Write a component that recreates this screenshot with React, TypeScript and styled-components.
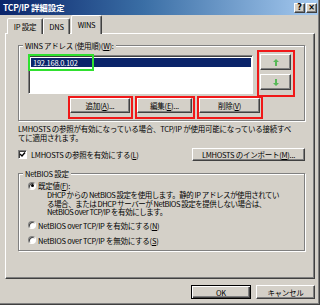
import React from "react";
import styled, { createGlobalStyle, css } from "styled-components";

const FONT = `"Noto Sans CJK JP", "Noto Sans", sans-serif`;

const GlobalStyle = createGlobalStyle`
  html, body { margin: 0; padding: 0; }
  body {
    background: #d4d0c8;
    font-family: ${FONT};
    font-size: 7.5px;
    letter-spacing: -0.25px;
    color: #000;
    overflow: hidden;
  }
  * { box-sizing: border-box; }
`;

const Window = styled.div`
  width: 320px;
  height: 305px;
  background: #d4d0c8;
  border-right: 1px solid #404040;
  border-bottom: 1px solid #404040;
  box-shadow: inset -1px -1px 0 #808080;
  display: flex;
  flex-direction: column;
`;

const TitleBar = styled.div`
  height: 15px;
  width: 318px;
  flex: none;
  background: linear-gradient(to right, #0a246a 0%, #3a6ea5 45%, #a6caf0 100%);
  display: flex;
  align-items: center;
  justify-content: space-between;
  padding: 0 1px 0 3px;
`;

const TitleText = styled.span`
  color: #fff;
  font-weight: bold;
  font-size: 8.5px;
  letter-spacing: -0.2px;
  line-height: 15px;
`;

const CaptionButtons = styled.div`
  display: flex;
  gap: 1px;
`;

const CaptionButton = styled.div`
  width: 11px;
  height: 10px;
  background: #d4d0c8;
  border: 1px solid;
  border-color: #fff #404040 #404040 #fff;
  box-shadow: inset -1px -1px 0 #808080;
  display: flex;
  align-items: center;
  justify-content: center;
  font-size: 8px;
  font-weight: bold;
  line-height: 8px;
  font-family: "DejaVu Sans", sans-serif;
  letter-spacing: 0;
`;

const Body = styled.div`
  flex: 1;
  display: flex;
  flex-direction: column;
  padding: 0 4px 0 5px;
`;

const TabStrip = styled.div`
  display: flex;
  align-items: flex-end;
  height: 19px;
  padding-left: 2px;
  margin-bottom: -1px;
  position: relative;
  z-index: 1;
`;

const Tab = styled.div<{ $active?: boolean; $w: number }>`
  width: ${(p) => p.$w}px;
  height: 16px;
  background: #d4d0c8;
  border: 1px solid;
  border-bottom: none;
  border-color: #fff #404040 transparent #fff;
  box-shadow: inset -1px 0 0 #808080;
  border-radius: 2px 2px 0 0;
  display: flex;
  align-items: center;
  justify-content: center;
  line-height: 9px;
  padding-bottom: 1px;
  ${(p) =>
    p.$active &&
    css`
      height: 19px;
      margin-left: 1px;
      padding-bottom: 2px;
    `}
`;

const Panel = styled.div`
  height: 246px;
  border: 1px solid;
  border-color: #fff #404040 #404040 #fff;
  box-shadow: inset -1px -1px 0 #808080;
  padding: 7px 9px 0 12px;
  display: flex;
  flex-direction: column;
`;

const GroupBox = styled.fieldset<{ $pb: number }>`
  margin: 0;
  padding: 0 9px ${(p) => p.$pb}px 9px;
  border: 1px solid #808080;
  box-shadow: inset 1px 1px 0 #fff, 1px 1px 0 #fff;
  min-width: 0;
`;

const Legend = styled.legend`
  padding: 0 2px;
  margin-left: -5px;
  line-height: 9px;
  background: #d4d0c8;
`;

const ListRow = styled.div`
  display: flex;
  align-items: flex-start;
  height: 42px;
  margin-top: 5px;
`;

const ListBox = styled.div`
  position: relative;
  width: 231px;
  height: 39px;
  background: #fff;
  border: 1px solid;
  border-color: #808080 #fff #fff #808080;
  box-shadow: inset 1px 1px 0 #404040;
  padding: 2px 1px 0 2px;
`;

const ListItem = styled.div<{ $selected?: boolean }>`
  height: 9px;
  line-height: 9px;
  padding-left: 2px;
  ${(p) =>
    p.$selected &&
    css`
      background: #0a246a;
      color: #fff;
    `}
`;

const Highlight = styled.div<{ $color: string }>`
  border: 2px solid ${(p) => p.$color};
`;

const ItemMark = styled(Highlight)`
  position: absolute;
  left: -1px;
  top: -2px;
  width: 66px;
  height: 17px;
`;

const ArrowBox = styled(Highlight)`
  margin-left: 4px;
  margin-top: -5px;
  width: 38px;
  height: 47px;
  display: flex;
  flex-direction: column;
  gap: 4px;
  padding: 2px 2px 0 1px;
`;

const ButtonPad = styled(Highlight)`
  padding: 0 1px 4px 0;
`;

const Button = styled.div<{ $w: number; $h?: number; $default?: boolean }>`
  width: ${(p) => p.$w}px;
  height: ${(p) => p.$h ?? 15}px;
  background: #d4d0c8;
  border: 1px solid;
  border-color: #fff #404040 #404040 #fff;
  box-shadow: inset -1px -1px 0 #808080;
  display: flex;
  align-items: center;
  justify-content: center;
  line-height: 9px;
  white-space: nowrap;
  ${(p) =>
    p.$default &&
    css`
      border: 1px solid #000;
      box-shadow: inset 1px 1px 0 #fff, inset -1px -1px 0 #404040, inset -2px -2px 0 #808080;
    `}
`;

const ButtonRow = styled.div`
  display: flex;
  gap: 2px;
  margin-left: 40px;
  margin-top: -1px;
`;

const Note = styled.p`
  margin: 3px 0 0 0;
  line-height: 9px;
  white-space: nowrap;
`;

const CheckRow = styled.div`
  display: flex;
  align-items: center;
  justify-content: space-between;
  margin-top: 6px;
  height: 13px;
`;

const CheckLabel = styled.label`
  display: flex;
  align-items: center;
  gap: 4px;
  line-height: 9px;
`;

const CheckBox = styled.span`
  width: 9px;
  height: 9px;
  flex: none;
  background: #fff;
  border: 1px solid;
  border-color: #808080 #fff #fff #808080;
  box-shadow: inset 1px 1px 0 #404040;
  display: flex;
  align-items: center;
  justify-content: center;
`;

const NetGroup = styled(GroupBox)`
  margin-top: 8px;
`;

const RadioRow = styled.div<{ $mt: number }>`
  display: flex;
  align-items: center;
  gap: 2px;
  margin-top: ${(p) => p.$mt}px;
  line-height: 9px;
  height: 9px;
`;

const Radio = styled.span<{ $checked?: boolean }>`
  width: 8px;
  height: 8px;
  flex: none;
  border-radius: 50%;
  background: #fff;
  border: 1px solid;
  border-color: #808080 #fff #fff #808080;
  box-shadow: inset 1px 1px 0 #404040;
  display: flex;
  align-items: center;
  justify-content: center;
  &::after {
    content: "";
    width: 3px;
    height: 3px;
    border-radius: 50%;
    background: ${(p) => (p.$checked ? "#000" : "transparent")};
  }
`;

const RadioDesc = styled.p`
  margin: 1px 0 0 19px;
  line-height: 8.5px;
  white-space: nowrap;
  letter-spacing: -0.45px;
`;

const Footer = styled.div`
  display: flex;
  justify-content: flex-end;
  gap: 5px;
  margin-top: 6px;
`;

const ArrowIcon = ({ down }: { down?: boolean }) => (
  <svg width="6" height="7" viewBox="0 0 6 7" style={{ transform: down ? "scaleY(-1)" : undefined }}>
    <path d="M3 0 L6 3 H4 V7 H2 V3 H0 Z" fill="#58b858" />
  </svg>
);

const CheckMark = () => (
  <svg width="7" height="7" viewBox="0 0 7 7">
    <path d="M1 3 L3 5 L6 1.5" stroke="#000" strokeWidth="1.4" fill="none" />
  </svg>
);

export default function App() {
  return (
    <>
      <GlobalStyle />
      <Window>
        <TitleBar>
          <TitleText>TCP/IP 詳細設定</TitleText>
          <CaptionButtons>
            <CaptionButton>?</CaptionButton>
            <CaptionButton>×</CaptionButton>
          </CaptionButtons>
        </TitleBar>
        <Body>
          <TabStrip>
            <Tab $w={36}>IP 設定</Tab>
            <Tab $w={27}>DNS</Tab>
            <Tab $w={31} $active>
              WINS
            </Tab>
          </TabStrip>
          <Panel>
            <GroupBox $pb={1}>
              <Legend>
                WINS アドレス (使用順)(<u>W</u>):
              </Legend>
              <ListRow>
                <ListBox>
                  <ListItem $selected>192.168.0.102</ListItem>
                  <ItemMark $color="#2fe02f" />
                </ListBox>
                <ArrowBox $color="#f01818">
                  <Button $w={31} $h={16}>
                    <ArrowIcon />
                  </Button>
                  <Button $w={31} $h={16}>
                    <ArrowIcon down />
                  </Button>
                </ArrowBox>
              </ListRow>
              <ButtonRow>
                <ButtonPad $color="#f01818">
                  <Button $w={60}>
                    <span>
                      追加(<u>A</u>)...
                    </span>
                  </Button>
                </ButtonPad>
                <ButtonPad $color="#f01818">
                  <Button $w={55}>
                    <span>
                      編集(<u>E</u>)...
                    </span>
                  </Button>
                </ButtonPad>
                <ButtonPad $color="#f01818">
                  <Button $w={61}>
                    <span>
                      削除(<u>V</u>)
                    </span>
                  </Button>
                </ButtonPad>
              </ButtonRow>
            </GroupBox>
            <Note>
              LMHOSTS の参照が有効になっている場合、TCP/IP が使用可能になっている接続すべ
              <br />
              てに適用されます。
            </Note>
            <CheckRow>
              <CheckLabel>
                <CheckBox>
                  <CheckMark />
                </CheckBox>
                <span>
                  LMHOSTS の参照を有効にする(<u>L</u>)
                </span>
              </CheckLabel>
              <Button $w={113} $h={13}>
                <span>
                  LMHOSTS のインポート(<u>M</u>)...
                </span>
              </Button>
            </CheckRow>
            <NetGroup $pb={5}>
              <Legend>NetBIOS 設定</Legend>
              <RadioRow $mt={3}>
                <Radio $checked />
                <span>
                  既定値(<u>F</u>):
                </span>
              </RadioRow>
              <RadioDesc>
                DHCP からの NetBIOS 設定を使用します。静的 IP アドレスが使用されてい
                <br />
                る場合、または DHCP サーバーが NetBIOS 設定を提供しない場合は、
                <br />
                NetBIOS over TCP/IP を有効にします。
              </RadioDesc>
              <RadioRow $mt={4}>
                <Radio />
                <span>
                  NetBIOS over TCP/IP を有効にする(<u>N</u>)
                </span>
              </RadioRow>
              <RadioRow $mt={6}>
                <Radio />
                <span>
                  NetBIOS over TCP/IP を無効にする(<u>S</u>)
                </span>
              </RadioRow>
            </NetGroup>
          </Panel>
          <Footer>
            <Button $w={60} $h={14} $default>
              OK
            </Button>
            <Button $w={59} $h={14}>
              キャンセル
            </Button>
          </Footer>
        </Body>
      </Window>
    </>
  );
}
